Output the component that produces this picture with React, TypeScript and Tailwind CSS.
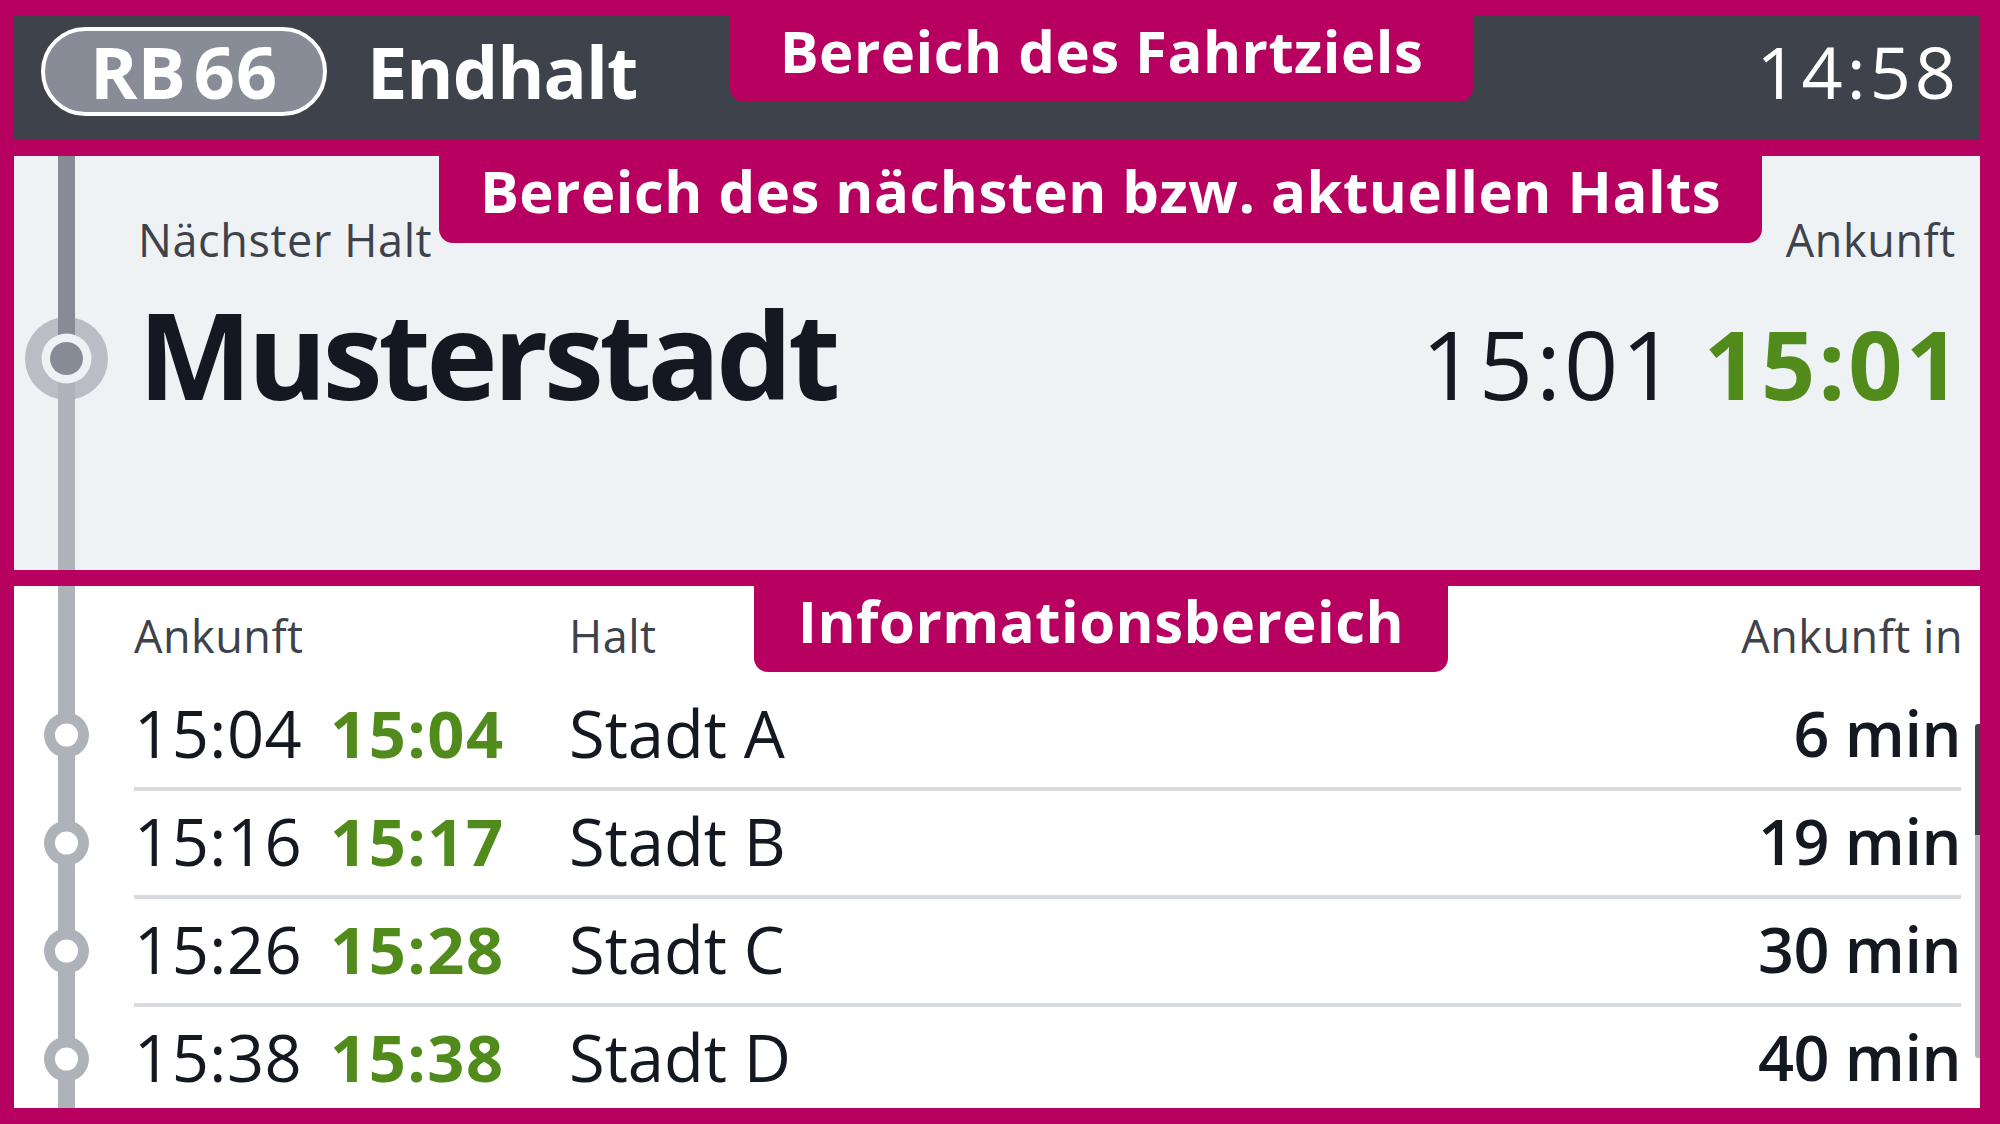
import React from "react";

const MAG = "bg-[#b80060]";

function MidTimeline() {
  return (
    <svg width="124" height="414" className="shrink-0 block">
      <circle cx="52.5" cy="202.5" r="41.5" fill="#babdc3" />
      <rect x="44" y="0" width="17" height="203" fill="#878b95" />
      <rect x="44" y="202" width="17" height="212" fill="#aeb2b9" />
      <circle cx="52.5" cy="202.5" r="25" fill="#eef2f5" />
      <circle cx="52.5" cy="202.5" r="16.5" fill="#878b95" />
    </svg>
  );
}

function ListTimeline() {
  const ys = [149, 257, 365, 473];
  return (
    <svg width="120" height="522" className="shrink-0 block">
      <rect x="44" y="0" width="17" height="522" fill="#aeb2b9" />
      {ys.map((y) => (
        <g key={y}>
          <circle cx="52.5" cy={y} r="22.5" fill="#aeb2b9" />
          <circle cx="52.5" cy={y} r="11.5" fill="#ffffff" />
        </g>
      ))}
    </svg>
  );
}

const rows = [
  { plan: "15:04", real: "15:04", stop: "Stadt A", inMin: "6 min" },
  { plan: "15:16", real: "15:17", stop: "Stadt B", inMin: "19 min" },
  { plan: "15:26", real: "15:28", stop: "Stadt C", inMin: "30 min" },
  { plan: "15:38", real: "15:38", stop: "Stadt D", inMin: "40 min" },
];

export default function App() {
  return (
    <div
      className={`w-[2000px] h-[1124px] ${MAG} flex flex-col pt-[16px] pb-[16px] pl-[14px] pr-[20px] font-['Open_Sans',sans-serif] overflow-hidden`}
    >
      {/* Header */}
      <div className="relative h-[123px] shrink-0 bg-[#3e424b] flex items-start pt-[11px] pl-[27px] pr-[24px]">
        <div className="h-[89px] w-[286px] rounded-full border-[4px] border-white bg-[#878c96] flex items-start justify-center text-white font-bold text-[72px] leading-[81px]">
          <span>RB</span>
          <span className="ml-[8px] tracking-[1px]">66</span>
        </div>
        <div className="ml-[40px] text-[72px] font-bold leading-[89px] tracking-[-1px] text-white">
          Endhalt
        </div>
        <div className="ml-auto mr-[-4px] text-[72px] leading-[89px] tracking-[4px] text-white">
          14:58
        </div>
        <div
          className={`absolute top-0 left-[716px] w-[743px] h-[86px] ${MAG} rounded-b-[14px] flex justify-center text-[58px] font-bold leading-[69px] tracking-[0.5px] text-white`}
        >
          <span>Bereich des Fahrtziels</span>
        </div>
      </div>

      {/* Next stop */}
      <div className="relative mt-[17px] h-[414px] shrink-0 bg-[#eef2f5] flex">
        <MidTimeline />
        <div className="flex-1 flex flex-col pr-[25px] pt-[53.5px]">
          <div className="flex justify-between text-[45px] leading-[60px] tracking-[0.6px] text-[#3e424b]">
            <span>Nächster Halt</span>
            <span className="mr-[-1px]">Ankunft</span>
          </div>
          <div className="mt-[18.5px] flex items-baseline leading-[130px]">
            <span className="text-[121px] font-bold tracking-[-4.5px] text-[#131821]">
              Musterstadt
            </span>
            <span className="ml-auto text-[95px] tracking-[3px] text-[#131821]">15:01</span>
            <span className="ml-[25px] mr-[-8px] text-[95px] font-bold tracking-[3px] text-[#508b1b]">
              15:01
            </span>
          </div>
        </div>
        <div
          className={`absolute top-[-16px] left-[425px] w-[1323px] h-[103px] ${MAG} rounded-b-[14px] flex justify-center text-[58px] font-bold leading-[101px] tracking-[0.5px] text-white`}
        >
          <span>Bereich des nächsten bzw. aktuellen Halts</span>
        </div>
      </div>

      {/* List */}
      <div className="relative mt-[16px] h-[522px] shrink-0 bg-white flex">
        <ListTimeline />
        <div className="flex-1 flex flex-col pr-[19px] overflow-hidden">
          <div className="h-[97px] shrink-0 pt-[19.5px] flex text-[45px] leading-[60px] tracking-[0.5px] text-[#3e424b]">
            <span className="w-[435px]">Ankunft</span>
            <span>Halt</span>
            <span className="ml-auto mr-[-2px]">Ankunft in</span>
          </div>
          {rows.map((r) => (
            <div key={r.stop} className="shrink-0">
              <div className="h-[104px] flex items-start text-[65px] leading-[100px] text-[#131821]">
                <span className="w-[196px] tracking-[0.5px]">{r.plan}</span>
                <span className="w-[239px] font-bold tracking-[1.5px] text-[#508b1b]">{r.real}</span>
                <span>{r.stop}</span>
                <span className="ml-auto font-semibold text-[63px] tracking-[-0.5px]">{r.inMin}</span>
              </div>
              <div className="h-[4px] bg-[#d7dadf]" />
            </div>
          ))}
        </div>
        <div className="absolute right-0 top-[138px] w-[5px] h-[334px] flex flex-col rounded-l-[3px] overflow-hidden">
          <div className="h-[111px] bg-[#3e424b]" />
          <div className="flex-1 bg-[#b1b4ba]" />
        </div>
        <div
          className={`absolute top-0 left-[740px] w-[694px] h-[86px] ${MAG} rounded-b-[14px] flex justify-center text-[58px] font-bold leading-[69px] tracking-[0.5px] text-white`}
        >
          <span>Informationsbereich</span>
        </div>
      </div>
    </div>
  );
}
